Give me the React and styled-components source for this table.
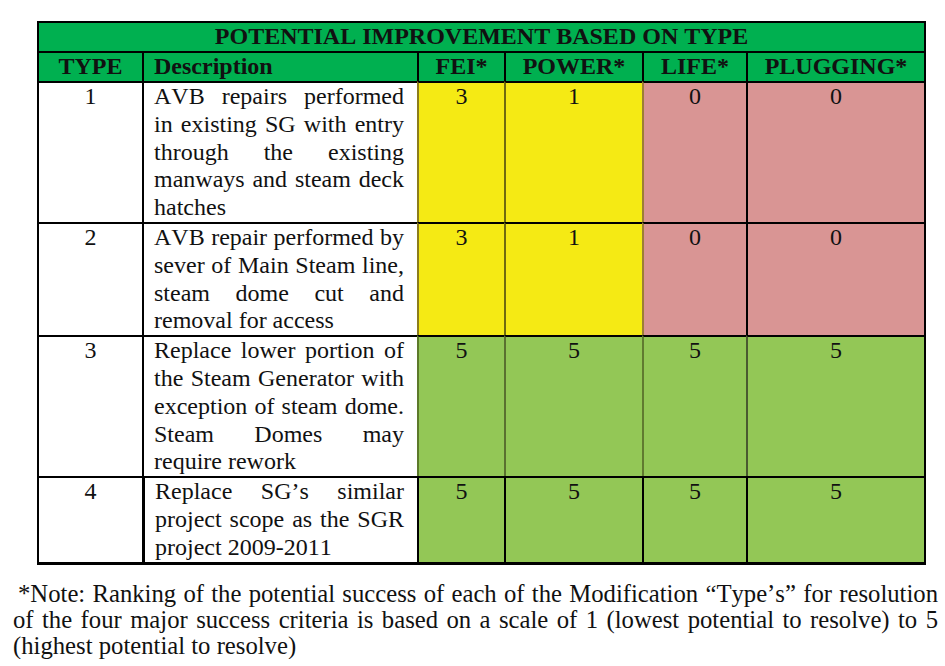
import React from "react";
import styled, { createGlobalStyle } from "styled-components";

const GlobalStyle = createGlobalStyle`
  body {
    margin: 0;
    background: #ffffff;
    font-family: "Liberation Serif", "Times New Roman", serif;
    font-kerning: none;
    color: #111111;
  }
`;

const COLUMNS = [103, 275, 87, 138, 104, 178];

const TONES = {
  yellow: "#f5ea14",
  pink: "#d99594",
  green: "#93c756",
};

const ROWS = [
  {
    type: "1",
    desc: "AVB repairs performed in existing SG with entry through the existing manways and steam deck hatches",
    scores: ["3", "1", "0", "0"],
    tones: ["yellow", "yellow", "pink", "pink"],
    edges: ["#8c7d1c", "#6f6a10", "#9c7e35", "#000000"],
  },
  {
    type: "2",
    desc: "AVB repair performed by sever of Main Steam line, steam dome cut and removal for access",
    scores: ["3", "1", "0", "0"],
    tones: ["yellow", "yellow", "pink", "pink"],
    edges: ["#8c7d1c", "#6f6a10", "#9c7e35", "#000000"],
  },
  {
    type: "3",
    desc: "Replace lower portion of the Steam Generator with exception of steam dome. Steam Domes may require rework",
    scores: ["5", "5", "5", "5"],
    tones: ["green", "green", "green", "green"],
    edges: ["#5c7a2a", "#5a7030", "#607a30", "#4a5a30"],
  },
  {
    type: "4",
    desc: "Replace SG\u2019s similar project scope as the SGR project 2009-2011",
    scores: ["5", "5", "5", "5"],
    tones: ["green", "green", "green", "green"],
    edges: ["#000000", "#000000", "#000000", "#000000"],
  },
];

const HEADINGS = ["FEI*", "POWER*", "LIFE*", "PLUGGING*"];

const NOTE_TEXT =
  "*Note: Ranking of the potential success of each of the Modification \u201cType\u2019s\u201d for resolution of the four major success criteria is based on a scale of 1 (lowest potential to resolve) to 5 (highest potential to resolve)";

const Page = styled.div`
  padding: 21px 0 0 13px;
  width: 925px;
`;

const Table = styled.table`
  margin-left: 24px;
  width: 889px;
  table-layout: fixed;
  border-collapse: separate;
  border-spacing: 0;
  border: 2px solid #000000;
  border-bottom-width: 3px;
  font-family: "Liberation Serif", "Times New Roman", serif;
  font-size: 24px;
  line-height: 27.8px;
  color: #111111;
`;

const TitleCell = styled.th`
  background: #00b050;
  padding: 0;
  height: 28px;
  font-weight: 700;
  text-align: center;
`;

const HeadCell = styled.th`
  background: #00b050;
  padding: ${(p) => (p.$left ? "0 13px 0 10px" : "0")};
  height: 28px;
  font-weight: 700;
  text-align: ${(p) => (p.$left ? "left" : "center")};
  border-top: 2px solid #000000;
  border-left: ${(p) => (p.$first ? "none" : "2px solid #000000")};
`;

const TypeCell = styled.td`
  padding: 0;
  vertical-align: top;
  text-align: center;
  border-top: 2px solid #000000;
  background: #ffffff;
`;

const DescCell = styled.td`
  padding: 0 13px 0 10px;
  vertical-align: top;
  text-align: justify;
  border-top: 2px solid #000000;
  border-left: ${(p) => (p.$thick ? "3px" : "2px")} solid #000000;
  background: #ffffff;
`;

const ScoreCell = styled.td`
  padding: 0;
  vertical-align: top;
  text-align: center;
  border-top: 2px solid #000000;
  border-left: 2px solid ${(p) => p.$edge};
  background: ${(p) => TONES[p.$tone]};
`;

const Note = styled.p`
  margin: 16px 0 0;
  font-family: "Liberation Serif", "Times New Roman", serif;
  font-size: 24.7px;
  line-height: 26px;
  text-align: justify;
  text-indent: 5px;
  color: #111111;
`;

export default function App() {
  return (
    <Page>
      <GlobalStyle />
      <Table>
        <colgroup>
          {COLUMNS.map((w, i) => (
            <col key={i} style={{ width: w }} />
          ))}
        </colgroup>
        <thead>
          <tr>
            <TitleCell colSpan={6}>POTENTIAL IMPROVEMENT BASED ON TYPE</TitleCell>
          </tr>
          <tr>
            <HeadCell $first>TYPE</HeadCell>
            <HeadCell $left>Description</HeadCell>
            {HEADINGS.map((h) => (
              <HeadCell key={h}>{h}</HeadCell>
            ))}
          </tr>
        </thead>
        <tbody>
          {ROWS.map((row) => (
            <tr key={row.type}>
              <TypeCell>{row.type}</TypeCell>
              <DescCell $thick={row.type === "4"}>{row.desc}</DescCell>
              {row.scores.map((s, i) => (
                <ScoreCell key={i} $tone={row.tones[i]} $edge={row.edges[i]}>
                  {s}
                </ScoreCell>
              ))}
            </tr>
          ))}
        </tbody>
      </Table>
      <Note>{NOTE_TEXT}</Note>
    </Page>
  );
}
